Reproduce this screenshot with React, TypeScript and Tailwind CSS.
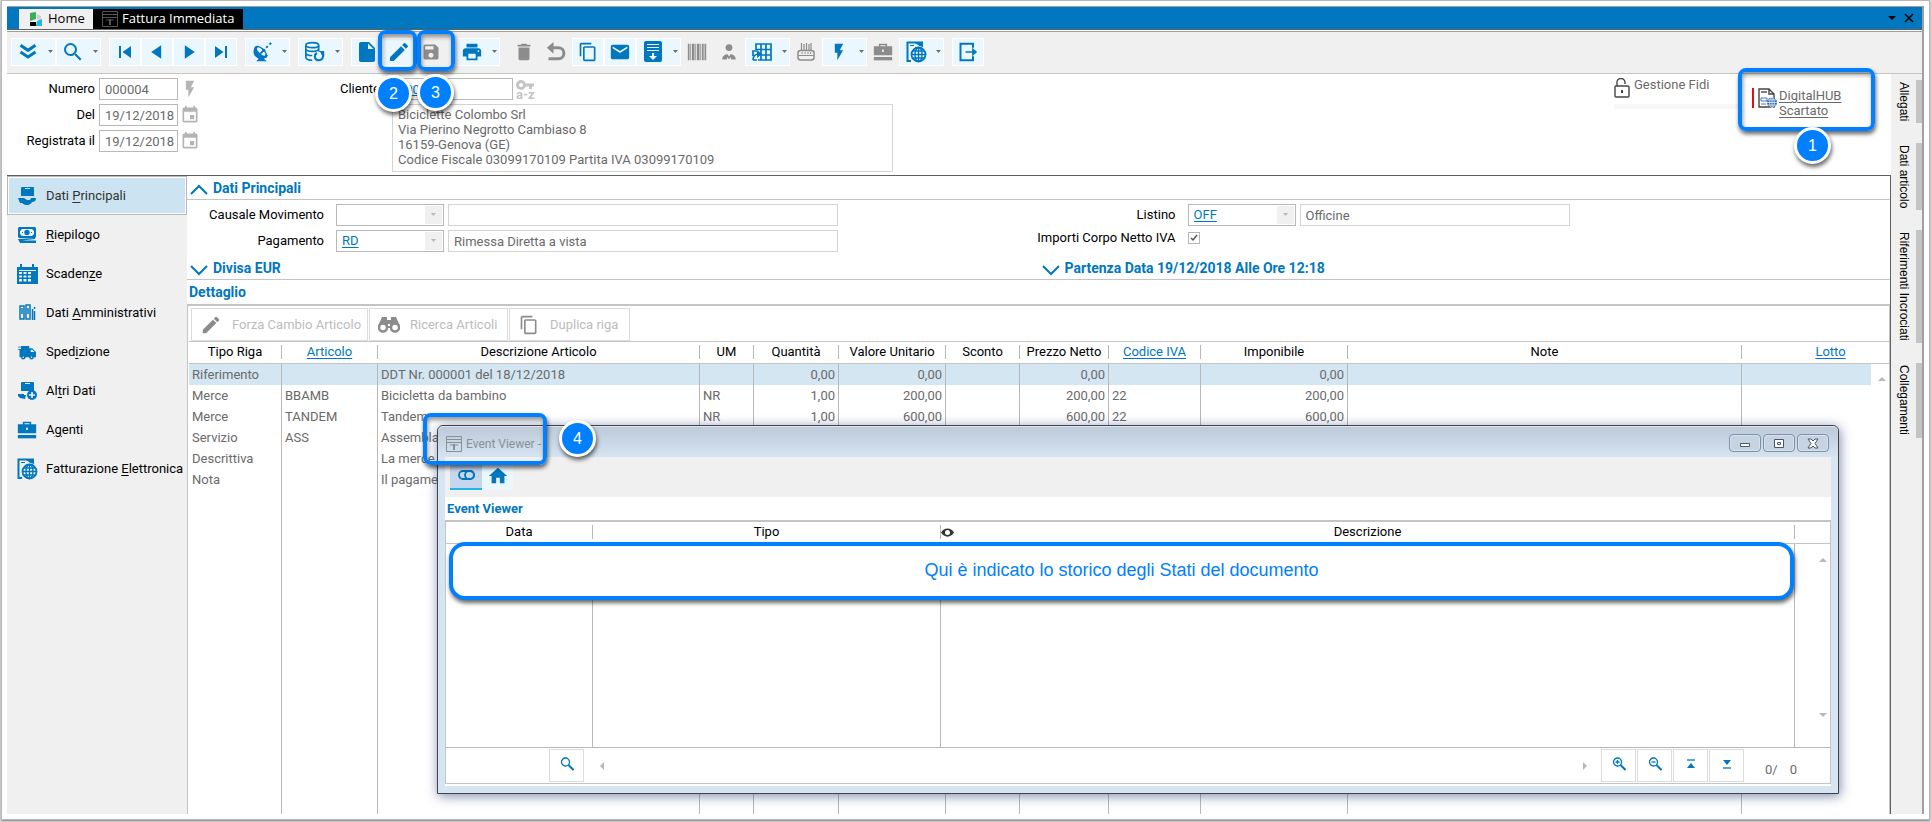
import type { ReactNode } from 'react'
import {
    MdSearch,
    MdSkipPrevious,
    MdSkipNext,
    MdInsertDriveFile,
    MdEdit,
    MdSave,
    MdPrint,
    MdDelete,
    MdContentCopy,
    MdMail,
    MdFlashOn,
    MdEvent,
    MdHome,
} from 'react-icons/md'

const Svg = ({ size = 20, children }: { size?: number; children: ReactNode }) => (
    <svg width={size} height={size} viewBox="0 0 24 24" fill="currentColor" stroke="none" className="shrink-0" aria-hidden="true">
        {children}
    </svg>
)

const DoubleDown = () => (
    <Svg>
        <path d="M3 4l9 6 9-6M3 12l9 6 9-6" fill="none" stroke="currentColor" strokeWidth="3.600" />
    </Svg>
)

const TriLeft = () => <Svg><path d="M17 4v16L5 12z" /></Svg>
const TriRight = () => <Svg><path d="M7 4v16l12-8z" /></Svg>

const Dish = () => (
    <Svg>
        <path d="M3 7c-3 6 0 11 5 13l-3 3h13l-4-3c3-1 5-2 5-4z" />
        <ellipse cx="10.500" cy="12" rx="9.500" ry="5" transform="rotate(45 10.500 12)" />
        <ellipse cx="11" cy="11.500" rx="6.500" ry="2.500" transform="rotate(45 11 11.500)" fill="#ebf7ff" />
        <path d="M10 14l5-5M17 7l2-2M21 3l2-2" fill="none" stroke="currentColor" strokeWidth="2.200" />
        <circle cx="14" cy="10" r="2" />
    </Svg>
)

const Database = () => (
    <Svg size={22}>
        <g fill="none" stroke="currentColor" strokeWidth="1.800">
            <ellipse cx="9" cy="4.500" rx="7" ry="2.800" />
            <path d="M2 4.500v4c0 1.500 3 2.800 7 2.800s7-1.300 7-2.800v-4M2 8.500v4.500c0 1.500 3 2.800 7 2.800M2 13v5c0 1.500 3 3 7 3M16 8.500v3" />
            <path d="M14 13c-4 3-2 8 2 8s7-5 3-8" strokeWidth="2.200" />
        </g>
        <path d="M16 11h6v5z" />
    </Svg>
)

const Undo = () => (
    <Svg>
        <path d="M6 7h9a6.500 6.500 0 010 13H3" fill="none" stroke="currentColor" strokeWidth="3.600" />
        <path d="M9 0v14L1 7z" />
    </Svg>
)

const Archive = () => (
    <svg width="18" height="21" viewBox="0 0 18 21" fill="currentColor" aria-hidden="true">
        <rect width="18" height="21" rx="2" />
        <path d="M3 3.500h12M3 6.500h12M3 9.500h12" stroke="#ebf7ff" />
        <path d="M8 12h2v3h3l-4 4-4-4h3z" fill="#ebf7ff" />
    </svg>
)

const Barcode = () => (
    <Svg>
        <path d="M1 2h2v20H1zM4 2h1v20H4zM6 2h3v20H6zM10 2h1v20h-1zM12 2h3v20h-3zM16 2h1v20h-1zM18 2h2v20h-2zM21 2h2v20h-2z" />
    </Svg>
)

const Person = () => (
    <Svg size={18}>
        <circle cx="12" cy="6" r="4.500" />
        <path d="M3 22c0-5 4-7 7-7l2 3 2-3c3 0 7 2 7 7h-6l-1-3-2 3-2-3-1 3z" />
    </Svg>
)

const Grid = () => (
    <svg width="20" height="18" viewBox="0 0 20 18" fill="none" stroke="currentColor" aria-hidden="true">
        <path d="M4 7V1h15v16H6M4 6.500h15M9 12h10M9 1v16M14 1v16" strokeWidth="1.700" />
        <path d="M1 17c0-4 2-6 6-6M1 13V8h4M1 17h4" strokeWidth="1.700" />
        <path d="M5 7l5 4-5 4z" fill="currentColor" stroke="none" />
    </svg>
)

const Register = () => (
    <svg width="18" height="18" viewBox="0 0 18 18" fill="none" stroke="currentColor" aria-hidden="true">
        <rect x="1" y="7.500" width="16" height="9.500" rx="2.500" strokeWidth="1.500" />
        <path d="M1.500 12.500h15M4.500 0v7M7 1v6M9.500 0v7M12 1v6M14 0v7" strokeWidth="1.200" />
        <path d="M5 9v2M8 9v2M11 9v2M13.500 9v2" />
    </svg>
)

const Briefcase = () => (
    <Svg>
        <path fillRule="evenodd" d="M7 5V2h10v3h6v11H1V5zM9 5h6V4H9zM11 9v3h2V9z" />
        <path d="M1 18h22v4H1z" />
    </Svg>
)

const DocGlobe = () => (
    <svg width="21" height="22" viewBox="0 0 21 22" fill="none" stroke="currentColor" aria-hidden="true">
        <path d="M5 20H1.500V1.500H16V8" strokeWidth="2" />
        <path d="M9 2h6v4zM4 4h4v1H4z" fill="currentColor" stroke="none" />
        <circle cx="12.500" cy="13.500" r="8.500" fill="#f0f7fc" stroke="none" />
        <circle cx="12.500" cy="13.500" r="7" strokeWidth="1.800" />
        <ellipse cx="12.500" cy="13.500" rx="3.500" ry="7" strokeWidth="1.400" />
        <path d="M12.500 6.500v14M6 13.500h13M7 10h11M7 17h11" strokeWidth="1.400" />
    </svg>
)

const Exit = () => (
    <Svg>
        <path d="M18 7V2H3v20h15v-5" fill="none" stroke="currentColor" strokeWidth="2.400" />
        <path d="M9 11h8V7l6 5-6 5v-4H9z" />
    </Svg>
)

const Binoculars = () => (
    <svg width="22" height="17" viewBox="0 0 22 17" fill="currentColor" aria-hidden="true">
        <path d="M4 1h5v3h4V1h5l4 9v2H0v-2z" />
        <circle cx="5" cy="11.500" r="4" fill="#fff" stroke="currentColor" strokeWidth="2.500" />
        <circle cx="17" cy="11.500" r="4" fill="#fff" stroke="currentColor" strokeWidth="2.500" />
        <circle cx="11" cy="9" r="1.200" fill="#fff" />
    </svg>
)

const KeyIcon = () => (
    <svg width="18" height="10" viewBox="0 0 18 10" fill="none" stroke="currentColor" strokeWidth="3" aria-hidden="true">
        <circle cx="5" cy="5" r="3.500" />
        <path d="M9 5h9M14.500 5v4" />
    </svg>
)

const HandBox = ({ plus = false }: { plus?: boolean }) => (
    <svg width="19" height="18" viewBox="0 0 19 18" fill="currentColor" aria-hidden="true">
        <path fillRule="evenodd" d="M3 1a1 1 0 011-1h11a1 1 0 011 1v8H3zM7 1v1h5V1z" />
        {plus ? (
            <>
                <path d="M0 12h6v1h2l-1 4-5-1-2-2z" />
                <circle cx="14" cy="13" r="5" />
                <path d="M14 10v6M11 13h6" stroke="#f0f0f0" strokeWidth="1.600" />
            </>
        ) : (
            <path d="M0 11h6l3 2h3l1-2h5c0 3-2 4-4 4-2 4-7 4-10 1H2z" />
        )}
    </svg>
)

const Money = () => (
    <svg width="18" height="16" viewBox="0 0 18 16" fill="currentColor" aria-hidden="true">
        <path fillRule="evenodd" d="M1 0h16l1 1v9l-1 1H1l-1-1V1zM4 2L2 4v3l2 2h10l2-2V4l-2-2z" />
        <circle cx="9" cy="5.500" r="2.700" />
        <path d="M4 5h1v1H4zM13 5h1v1h-1zM0 12l17-1v1L4 13.500h14V16H2z" />
    </svg>
)

const CalendarGrid = () => (
    <svg width="21" height="20" viewBox="0 0 21 20" fill="currentColor" aria-hidden="true">
        <path d="M0 3h3V0h2v3h10V0h2v3h4v17H0z" />
        <path d="M2 6.500h17" stroke="#f0f0f0" />
        <path d="M2 8h3v2H2zM6.500 8h3v2h-3zM11 8h3v2h-3zM2 11.500h3v2H2zM6.500 11.500h3v2h-3zM11 11.500h3v2h-3zM2 15h3v2.500H2zM6.500 15h3v2.500h-3zM11 15h3v2.500h-3z" fill="#f0f0f0" />
    </svg>
)

const Binders = () => (
    <svg width="17" height="17" viewBox="0 0 17 17" fill="none" stroke="currentColor" aria-hidden="true">
        <path d="M1 2h4v13H1zM7 1h4v14H7z" strokeWidth="1.500" />
        <path d="M3 4v6M9 4v6M13.500 5v11M15.500 3v2M15.500 7v9" strokeWidth="1.500" />
    </svg>
)

const Truck = () => (
    <Svg size={18}>
        <path d="M4 4h11v3h4l5 5v7H2V9H0V8h4V6H0V5h4z" />
        <circle cx="7" cy="19" r="3" />
        <circle cx="18" cy="19" r="3" />
        <circle cx="7" cy="19" r="1" fill="#f0f0f0" />
        <circle cx="18" cy="19" r="1" fill="#f0f0f0" />
        <path d="M17 9h2l3 3h-5z" fill="#f0f0f0" />
    </Svg>
)

const FormIcon = () => (
    <svg width="16" height="16" viewBox="0 0 16 16" fill="none" stroke="currentColor" className="shrink-0" aria-hidden="true">
        <path d="M.5.5h15v15H.5zM1 3.500h14M1 6.500h14M4 9h8" />
        <path d="M8 8v6" strokeWidth="2" />
    </svg>
)

const Chevron = ({ up = false }: { up?: boolean }) => (
    <svg width="18" height="12" viewBox="0 0 18 12" fill="none" stroke="#0077be" strokeWidth="2" className={up ? 'mt-0.5' : 'mt-1.5'} aria-hidden="true">
        <path d={up ? 'M1 11l8-8 8 8' : 'M1 1l8 8 8-8'} />
    </svg>
)

const Arrow = ({ dir }: { dir: 'up' | 'down' | 'left' | 'right' }) => {
    const d = {
        up: 'M0 6l4-4 4 4z',
        down: 'M0 2l4 4 4-4z',
        left: 'M6 0v8L2 4z',
        right: 'M2 0v8l4-4z',
    }[dir]
    return (
        <svg width="8" height="8" viewBox="0 0 8 8" fill="#b8b8b8" aria-hidden="true">
            <path d={d} />
        </svg>
    )
}

type Tool = { name: string; icon: ReactNode; menu?: boolean; off?: boolean }

const toolGroups: Tool[][] = [
    [
        { name: 'Espandi', icon: <DoubleDown />, menu: true },
        { name: 'Cerca', icon: <MdSearch className="size-6" />, menu: true },
    ],
    [
        { name: 'Primo', icon: <MdSkipPrevious className="size-6" /> },
        { name: 'Precedente', icon: <TriLeft /> },
        { name: 'Successivo', icon: <TriRight /> },
        { name: 'Ultimo', icon: <MdSkipNext className="size-6" /> },
    ],
    [{ name: 'Radar', icon: <Dish />, menu: true }],
    [{ name: 'Archivi', icon: <Database />, menu: true }],
    [
        { name: 'Nuovo', icon: <MdInsertDriveFile className="size-6" /> },
        { name: 'Modifica', icon: <MdEdit className="size-6" /> },
        { name: 'Salva', icon: <MdSave className="size-5" />, off: true },
    ],
    [{ name: 'Stampa', icon: <MdPrint className="size-[22px]" />, menu: true }],
    [
        { name: 'Elimina', icon: <MdDelete className="size-[22px]" />, off: true },
        { name: 'Annulla', icon: <Undo />, off: true },
        { name: 'Copia', icon: <MdContentCopy className="size-5" /> },
        { name: 'Email', icon: <MdMail className="size-[22px]" /> },
        { name: 'Archivia', icon: <Archive />, menu: true },
        { name: 'Codice a barre', icon: <Barcode />, off: true },
        { name: 'Utente', icon: <Person />, off: true },
        { name: 'Griglia', icon: <Grid />, menu: true },
        { name: 'Registratore', icon: <Register />, off: true },
        { name: 'Azioni', icon: <MdFlashOn className="size-5" />, menu: true },
        { name: 'Valigetta', icon: <Briefcase />, off: true },
        { name: 'Fattura elettronica', icon: <DocGlobe />, menu: true },
    ],
    [{ name: 'Esci', icon: <Exit /> }],
]

const ToolButton = ({ tool }: { tool: Tool }) => {
    let look = 'w-8 justify-center bg-[#ebf7ff] border-white text-[#0077be]'
    if (tool.menu) look = 'w-[45px] justify-between pl-1 pr-0.5 bg-[#ebf7ff] border-white text-[#0077be]'
    if (tool.off) look = 'w-8 justify-center border-transparent text-[#8c8c8c]'
    return (
        <button aria-label={tool.name} className={`flex h-7 items-center border ${look}`}>
            <span className="flex w-6 justify-center">{tool.icon}</span>
            {tool.menu && (
                <svg width="5" height="4" viewBox="0 0 5 4" fill="#6e6e6e" aria-hidden="true">
                    <path d="M0 0h5L2.500 3z" />
                </svg>
            )}
        </button>
    )
}

const navItems = [
    { pre: 'Dati ', key: 'P', post: 'rincipali', icon: <HandBox />, active: true },
    { pre: '', key: 'R', post: 'iepilogo', icon: <Money /> },
    { pre: 'Scaden', key: 'z', post: 'e', icon: <CalendarGrid /> },
    { pre: 'Dati ', key: 'A', post: 'mministrativi', icon: <Binders /> },
    { pre: 'Sped', key: 'i', post: 'zione', icon: <Truck /> },
    { pre: 'Al', key: 't', post: 'ri Dati', icon: <HandBox plus /> },
    { pre: 'A', key: 'g', post: 'enti', icon: <Briefcase /> },
    { pre: 'Fatturazione ', key: 'E', post: 'lettronica', icon: <DocGlobe /> },
]

const columns = [
    { name: 'Tipo Riga', width: 'w-[93px]' },
    { name: 'Articolo', width: 'w-24', link: true },
    { name: 'Descrizione Articolo', width: 'w-[322px]' },
    { name: 'UM', width: 'w-[54px]' },
    { name: 'Quantità', width: 'w-[85px]', right: true },
    { name: 'Valore Unitario', width: 'w-[107px]', right: true },
    { name: 'Sconto', width: 'w-[74px]', right: true },
    { name: 'Prezzo Netto', width: 'w-[89px]', right: true },
    { name: 'Codice IVA', width: 'w-[92px]', link: true },
    { name: 'Imponibile', width: 'w-[147px]', right: true },
    { name: 'Note', width: '' },
    { name: 'Lotto', width: 'w-[129px]', link: true },
]

const rows = [
    ['Riferimento', '', 'DDT Nr. 000001 del 18/12/2018', '', '0,00', '0,00', '', '0,00', '', '0,00', '', ''],
    ['Merce', 'BBAMB', 'Bicicletta da bambino', 'NR', '1,00', '200,00', '', '200,00', '22', '200,00', '', ''],
    ['Merce', 'TANDEM', 'Tandem', 'NR', '1,00', '600,00', '', '600,00', '22', '600,00', '', ''],
    ['Servizio', 'ASS', 'Assemblaggio', '', '', '', '', '', '', '', '', ''],
    ['Descrittiva', '', 'La merce', '', '', '', '', '', '', '', '', ''],
    ['Nota', '', 'Il pagamento', '', '', '', '', '', '', '', '', ''],
]

const sideTabs = [
    { name: 'Allegati', height: 'h-[43px]' },
    { name: 'Dati articolo', height: 'h-[67px]' },
    { name: 'Riferimenti Incrociati', height: 'h-[113px]' },
    { name: 'Collegamenti', height: 'h-[75px]' },
]

const Field = ({ id, label, value, icon }: { id: string; label: string; value: string; icon: ReactNode }) => (
    <div className="flex h-[22px] items-center">
        <label htmlFor={id} className="mr-1 w-[88px] text-right">{label}</label>
        <input id={id} defaultValue={value} className="h-full w-[79px] border border-[#b8b8b8] pl-[5px] text-[#6a6a6a]" />
        <span className="ml-0.5 text-[#b4b4b4]">{icon}</span>
    </div>
)

const LookupRow = ({ id, label, code, text, wide }: { id: string; label: string; code: string; text: string; wide?: boolean }) => (
    <div className="flex h-[22px] items-center">
        <label htmlFor={id} className="mr-3 w-[137px] text-right">{label}</label>
        <div className="relative mr-1 h-full w-[108px]">
            <select id={id} className="h-full w-full appearance-none border border-[#b8b8b8] bg-white px-[5px] text-[#0077be] underline underline-offset-2">
                <option>{code}</option>
            </select>
            <span className="pointer-events-none absolute inset-y-0.5 right-0.5 flex w-[17px] items-center justify-center bg-[#f0f0f0]">
                <svg width="5" height="4" viewBox="0 0 5 4" fill="#b8b8b8" aria-hidden="true"><path d="M0 0h5L2.500 3z" /></svg>
            </span>
        </div>
        <input
            aria-label={`Descrizione ${label}`}
            defaultValue={text}
            className={`h-full border border-[#d4d4d4] px-[5px] text-[#6a6a6a] ${wide ? 'w-[390px]' : 'w-[270px]'}`}
        />
    </div>
)

const SectionTitle = ({ children, up }: { children: ReactNode; up?: boolean }) => (
    <h2 className="flex h-6 items-center gap-[5px] border-b border-[#c4c4c4] pl-[3px] text-sm font-bold text-[#0077be]">
        <Chevron up={up} />
        {children}
    </h2>
)

const Badge = ({ n, pos }: { n: number; pos: string }) => (
    <span
        className={`absolute z-30 flex size-[37px] items-center justify-center rounded-full border-[3px] border-white bg-[#0080ff] font-['Liberation_Sans',sans-serif] text-base text-white shadow-[1px_3px_4px_rgba(0,0,0,0.6)] ${pos}`}
    >
        {n}
    </span>
)

const Highlight = ({ pos }: { pos: string }) => (
    <span className={`pointer-events-none absolute z-20 rounded-lg border-4 border-[#0080ff] shadow-[1px_3px_4px_rgba(0,0,0,0.6),inset_1px_3px_4px_rgba(0,0,0,0.4)] ${pos}`} />
)

const Divider = ({ children, last, center = true }: { children?: ReactNode; last?: boolean; center?: boolean }) => (
    <div className={`mb-px flex h-3.5 items-center ${center ? 'justify-center' : ''} ${last ? 'pl-12' : 'border-r border-[#b8b8b8]'}`}>{children}</div>
)

function TitleBar() {
    return (
        <header className="flex h-[25px] items-end border-b border-[#a0a0a0] bg-white pb-px">
            <div className="flex h-full w-full items-end border-b border-[#606060] bg-[#0077be] pl-3 font-['Open_Sans',sans-serif] text-[13px] whitespace-nowrap">
                <button className="flex h-5 w-[74px] items-center gap-1.5 bg-[#f0f0f0] pl-[11px]">
                    <svg width="12" height="15" viewBox="0 0 12 15" aria-hidden="true">
                        <path d="M0 1l6-1v7L0 9z" fill="#3cab5a" />
                        <path d="M7 2l4 2v5l-4-2z" fill="#d0d0d0" />
                        <path d="M0 10h6v4H0z" />
                        <path d="M7 9l5-2v7H6z" fill="#25b5e8" />
                    </svg>
                    Home
                </button>
                <button className="flex h-5 w-[150px] items-center gap-1 bg-black pl-[9px] text-white">
                    <span className="text-[#555]"><FormIcon /></span>
                    Fattura Immediata
                </button>
                <div className="ml-auto flex h-full items-center gap-2 pr-2 text-black">
                    <button aria-label="Elenco schede">
                        <svg width="8" height="5" viewBox="0 0 8 5"><path d="M0 0h8L4 4z" /></svg>
                    </button>
                    <button aria-label="Chiudi scheda">
                        <svg width="10" height="10" viewBox="0 0 10 10" stroke="#000" strokeWidth="1.600"><path d="M1 1l8 8M9 1L1 9" /></svg>
                    </button>
                </div>
            </div>
        </header>
    )
}

function DocumentHeader() {
    return (
        <section className="flex h-[102px] border-b border-[#606060] bg-white pt-1">
            <div className="flex flex-col gap-1">
                <Field id="numero" label="Numero" value="000004" icon={<MdFlashOn className="size-5" />} />
                <Field id="del" label="Del" value="19/12/2018" icon={<MdEvent className="size-5" />} />
                <Field id="registrata" label="Registrata il" value="19/12/2018" icon={<MdEvent className="size-5" />} />
            </div>
            <div className="ml-[138px] flex flex-col gap-1">
                <div className="flex h-[22px] items-center">
                    <label htmlFor="cliente" className="mr-1 w-[50px] pr-2 text-right">Cliente</label>
                    <input id="cliente" defaultValue="000001" className="h-full w-[121px] border border-[#b8b8b8] px-[5px] text-[#0077be] underline" />
                    <span className="ml-[3px] flex flex-col items-center text-[13px] leading-[9px] font-bold text-[#c4c4c4]">
                        <KeyIcon />
                        a-z
                    </span>
                </div>
                <textarea
                    aria-label="Dati cliente"
                    readOnly
                    className="ml-[54px] h-[68px] w-[501px] resize-none border border-[#d4d4d4] px-[5px] py-0.5 leading-[15px] text-[#6a6a6a]"
                    value={'Biciclette Colombo Srl\nVia Pierino Negrotto Cambiaso 8\n16159-Genova (GE)\nCodice Fiscale 03099170109 Partita IVA 03099170109'}
                />
            </div>
            <div className="ml-auto w-[124px] text-[#6a6a6a]">
                <div className="flex items-start gap-1 leading-[14px]">
                    <svg width="16" height="20" viewBox="0 0 16 20" fill="none" stroke="#444" strokeWidth="1.400" aria-hidden="true">
                        <rect x="1" y="8" width="14" height="11" rx="1" />
                        <path d="M3 8V5a4 4 0 018-1v2" />
                        <path d="M8 12v3" strokeWidth="2" />
                    </svg>
                    Gestione Fidi
                </div>
                <div className="mt-1.5 h-[5px] bg-[#f7f7f7]" />
            </div>
            <div className="relative w-[153px] text-[#6a6a6a]">
                <div className="mt-2.5 ml-3.5 flex">
                    <span className="mr-1 h-5 w-0.5 bg-[#e01010]" />
                    <svg width="20" height="20" viewBox="0 0 20 20" fill="none" stroke="#444" aria-hidden="true">
                        <path d="M1 1h10l5 5v13H1zM11 1v5h5" strokeWidth="1.400" />
                        <path d="M3 4h6" strokeWidth="1.400" />
                        <path d="M3 10h6v3H3zM3 16h5" stroke="#3c78c8" />
                        <circle cx="14" cy="14.500" r="5" fill="#2b64b0" stroke="none" />
                        <path d="M9 14.500h10M14 9.500v10M10 12h8M10 17h8" stroke="#fff" strokeWidth=".7" />
                        <ellipse cx="14" cy="14.500" rx="2.300" ry="5" stroke="#fff" strokeWidth=".7" />
                    </svg>
                    <a href="#digitalhub" className="ml-px w-20 leading-[15px] underline underline-offset-2">DigitalHUB Scartato</a>
                </div>
                <Highlight pos="-top-2.5 left-0 h-[63px] w-[137px]" />
                <Badge n={1} pos="top-[49px] left-14" />
            </div>
        </section>
    )
}

function DetailTable() {
    return (
        <table className="h-full w-full table-fixed border-separate border-spacing-0">
            <thead>
                <tr className="h-[22px]">
                    {columns.map((col, i) => (
                        <th key={col.name} className={`border-b border-[#c4c4c4] p-0 font-normal whitespace-nowrap ${col.width}`}>
                            <Divider last={i === columns.length - 1}>
                                {col.link ? <a href="#colonna" className="text-[#0077be] underline underline-offset-2">{col.name}</a> : col.name}
                            </Divider>
                        </th>
                    ))}
                    <th className="w-[18px] border-b border-[#c4c4c4] p-0" />
                </tr>
            </thead>
            <tbody className="text-[#6a6a6a]">
                {rows.map((row, r) => (
                    <tr key={r} className="h-[21px]">
                        {row.map((cell, i) => (
                            <td
                                key={i}
                                className={`overflow-hidden px-[3px] py-0 whitespace-nowrap ${i < row.length - 1 ? 'border-r border-[#b8b8b8]' : ''} ${columns[i].right ? 'text-right' : ''} ${r === 0 ? 'bg-[#d4e6f2]' : ''}`}
                            >
                                {cell}
                            </td>
                        ))}
                        <td className="p-0">{r === 0 && <span className="flex justify-end pt-2 pr-[3px]"><Arrow dir="up" /></span>}</td>
                    </tr>
                ))}
                <tr>
                    {columns.map((col, i) => (
                        <td key={col.name} className={i < columns.length - 1 ? 'border-r border-[#b8b8b8]' : ''} />
                    ))}
                    <td />
                </tr>
            </tbody>
        </table>
    )
}

const ActionButton = ({ icon, children, width }: { icon: ReactNode; children: ReactNode; width: string }) => (
    <button className={`flex h-[33px] items-center border border-[#dcdcdc] pl-2 text-[#bcbcbc] ${width}`}>
        <span className="mr-2.5 flex w-[22px] justify-center text-[#8c8c8c]">{icon}</span>
        {children}
    </button>
)

const FooterButton = ({ label, children }: { label: string; children: ReactNode }) => (
    <button aria-label={label} className="flex h-[33px] w-[35px] items-center justify-center border border-[#dcdcdc] pb-1 text-[#0077be]">
        <svg width="14" height="14" viewBox="0 0 14 14" fill="none" stroke="currentColor" strokeWidth="1.300" aria-hidden="true">
            {children}
        </svg>
    </button>
)

const WindowButton = ({ label, children }: { label: string; children: ReactNode }) => (
    <button aria-label={label} className="flex h-[18px] w-8 items-center justify-center rounded-sm border border-[#8090a8] bg-[#c6d3e1] shadow-[inset_0_0_0_1px_#d8e2ee]">
        <svg width="12" height="11" viewBox="0 0 12 11" fill="#fff" stroke="#4c5468" aria-hidden="true">{children}</svg>
    </button>
)

function EventViewer() {
    return (
        <div className="absolute top-[424px] right-[90px] left-[435px] z-10 flex h-[369px] flex-col rounded-t-md border border-[#404448] bg-[#d7e4f2] px-[7px] pb-[7px] shadow-[1px_2px_12px_rgba(40,60,120,0.6)]">
            <div className="-mx-[7px] flex h-[31px] items-center justify-between rounded-t-md border-t border-[#dce6f0] bg-linear-to-b from-[#bccad9] to-[#d6e3f1] pt-1 pr-[9px] pl-2">
                <div className="flex items-center gap-1 text-xs text-[#8a8f96]">
                    <FormIcon />
                    Event Viewer -
                </div>
                <div className="mb-0.5 flex gap-0.5">
                    <WindowButton label="Riduci"><path d="M1.500 5.500h9v3h-9z" /></WindowButton>
                    <WindowButton label="Ingrandisci"><path d="M1.500 1.500h9v8h-9zM4.500 4.500h3v2h-3z" /></WindowButton>
                    <WindowButton label="Chiudi"><path d="M1 1h3l2 2 2-2h3L8 5.500l3 4.500H8L6 8l-2 2H1l3-4.500z" /></WindowButton>
                </div>
            </div>
            <div className="flex h-10 items-end bg-[#f0f0f0] pb-[7px] pl-[5px]">
                <button aria-label="Collega" className="flex h-7 w-8 items-center justify-center border-b-2 border-[#1fb5e8] bg-[#c6d6ec] text-[#0077be]">
                    <svg width="17" height="10" viewBox="0 0 17 10" fill="none" stroke="currentColor" strokeWidth="1.800">
                        <rect x="1" y="1" width="15" height="8" rx="4" />
                        <rect x="7" y="1" width="9" height="8" rx="4" />
                    </svg>
                </button>
                <button aria-label="Home" className="flex h-7 w-[31px] items-center justify-center bg-[#ebf7ff] text-[#0077be]">
                    <MdHome className="size-[22px]" />
                </button>
            </div>
            <div className="flex min-h-0 flex-1 flex-col bg-white pb-0.5">
                <h2 className="flex h-[23px] items-center pl-0.5 text-[13px] font-bold text-[#0077be]">Event Viewer</h2>
                <div className="relative flex min-h-0 flex-1 flex-col border border-t-2 border-[#c4c4c4]">
                    <table className="w-full flex-1 table-fixed border-separate border-spacing-0">
                        <thead>
                            <tr className="h-[22px]">
                                <th className="w-[147px] border-b border-[#c4c4c4] p-0 font-normal"><Divider>Data</Divider></th>
                                <th className="w-[348px] border-b border-[#c4c4c4] p-0 font-normal"><Divider>Tipo</Divider></th>
                                <th className="border-b border-[#c4c4c4] p-0 font-normal">
                                    <Divider center={false}>
                                        <svg width="13" height="9" viewBox="0 0 13 9" aria-hidden="true">
                                            <path d="M0 4.500C3-1 10-1 13 4.500 10 10 3 10 0 4.500z" fill="#333" />
                                            <circle cx="6.500" cy="4.500" r="2.500" fill="#fff" />
                                        </svg>
                                        <span className="flex-1 pr-[13px] text-center">Descrizione</span>
                                    </Divider>
                                </th>
                                <th className="w-[35px] border-b border-[#c4c4c4] p-0" />
                            </tr>
                        </thead>
                        <tbody>
                            <tr>
                                <td className="border-r border-b border-[#b8b8b8]" />
                                <td className="border-r border-b border-[#b8b8b8]" />
                                <td className="border-r border-b border-[#b8b8b8]" />
                                <td className="border-b border-[#b8b8b8] p-0">
                                    <div className="flex h-[203px] flex-col items-end justify-between pt-3 pr-[3px] pb-7">
                                        <Arrow dir="up" />
                                        <Arrow dir="down" />
                                    </div>
                                </td>
                            </tr>
                        </tbody>
                    </table>
                    <div className="flex h-[35px] items-center pl-[103px] text-[#6a6a6a]">
                        <FooterButton label="Cerca">
                            <circle cx="5.500" cy="5" r="4" />
                            <path d="M8.500 8l5 5" strokeWidth="2" />
                        </FooterButton>
                        <span className="ml-3.5"><Arrow dir="left" /></span>
                        <span className="mr-3 ml-auto"><Arrow dir="right" /></span>
                        <div className="flex gap-px">
                            <FooterButton label="Ingrandisci">
                                <circle cx="5.500" cy="5" r="4" />
                                <path d="M8.500 8l5 5" strokeWidth="2" />
                                <path d="M3.500 5h4M5.500 3v4" />
                            </FooterButton>
                            <FooterButton label="Riduci">
                                <circle cx="5.500" cy="5" r="4" />
                                <path d="M8.500 8l5 5" strokeWidth="2" />
                                <path d="M3.500 5h4" />
                            </FooterButton>
                            <FooterButton label="Inizio">
                                <path d="M3 3h8" />
                                <path d="M3 11h8L7 6z" fill="currentColor" stroke="none" />
                            </FooterButton>
                            <FooterButton label="Fine">
                                <path d="M3 11h8" />
                                <path d="M3 3h8L7 8z" fill="currentColor" stroke="none" />
                            </FooterButton>
                        </div>
                        <span className="mt-2 mr-[33px] ml-[21px] flex gap-3"><span>0/</span><span>0</span></span>
                    </div>
                    <div className="absolute top-5 right-9 left-[3px] flex h-[58px] items-center justify-center rounded-2xl border-4 border-[#0080ff] bg-white pb-0.5 font-['Liberation_Sans',sans-serif] text-lg text-[#0080ff] shadow-[1px_3px_4px_rgba(0,0,0,0.6)]">
                        Qui è indicato lo storico degli Stati del documento
                    </div>
                </div>
            </div>
        </div>
    )
}

export default function App() {
    return (
        <div className="h-screen bg-[#ececec] px-px pb-0.5 font-['Roboto',sans-serif] text-[13px] text-black">
            <div className="relative flex h-full border border-[#b8b8b8] bg-white p-[5px] shadow-[0_1px_2px_rgba(0,0,0,0.5)]">
                <div className="flex min-w-0 flex-1 flex-col border-t border-r-2 border-[#a0a0a0]">
                    <TitleBar />
                    <div className="flex h-[42px] items-center gap-2 border-b border-[#c4c4c4] bg-[#f0f0f0] pb-0.5 pl-1">
                        {toolGroups.map((group, i) => (
                            <div key={i} className="flex">
                                {group.map((tool) => <ToolButton key={tool.name} tool={tool} />)}
                            </div>
                        ))}
                    </div>
                    <div className="flex min-h-0 flex-1">
                        <div className="flex min-w-0 flex-1 flex-col">
                            <DocumentHeader />
                            <div className="flex min-h-0 flex-1 border-r border-[#606060]">
                                <nav className="w-[180px] shrink-0 bg-[#f0f0f0]">
                                    {navItems.map((item) => (
                                        <a
                                            key={item.key + item.post}
                                            href="#sezione"
                                            className={`flex h-[39px] items-center whitespace-nowrap ${item.active ? 'border border-[#b8b8b8] bg-[#cce4f2] text-[#333] shadow-[inset_0_0_0_1px_#fff]' : 'border border-transparent'}`}
                                        >
                                            <span className="flex w-[38px] justify-center text-[#0077be]">{item.icon}</span>
                                            <span>
                                                {item.pre}
                                                <u className="underline-offset-2">{item.key}</u>
                                                {item.post}
                                            </span>
                                        </a>
                                    ))}
                                </nav>
                                <main className="flex min-w-0 flex-1 flex-col bg-white">
                                    <SectionTitle up>Dati Principali</SectionTitle>
                                    <div className="grid grid-cols-2">
                                        <div className="flex flex-col gap-1 py-1">
                                            <LookupRow id="causale" label="Causale Movimento" code="" text="" wide />
                                            <LookupRow id="pagamento" label="Pagamento" code="RD" text="Rimessa Diretta a vista" wide />
                                        </div>
                                        <div className="flex flex-col gap-1 py-1">
                                            <LookupRow id="listino" label="Listino" code="OFF" text="Officine" />
                                            <div className="flex h-4 items-center">
                                                <label htmlFor="netto" className="mr-3 flex w-[137px] justify-end whitespace-nowrap">Importi Corpo Netto IVA</label>
                                                <input
                                                    id="netto"
                                                    type="checkbox"
                                                    defaultChecked
                                                    className="peer size-3 appearance-none border border-[#b8b8b8]"
                                                />
                                                <svg width="8" height="8" viewBox="0 0 8 8" fill="none" stroke="#555" strokeWidth="1.500" className="pointer-events-none invisible -ml-2.5 peer-checked:visible">
                                                    <path d="M1 4l2 2 4-5" />
                                                </svg>
                                            </div>
                                        </div>
                                        <SectionTitle>Divisa EUR</SectionTitle>
                                        <SectionTitle>Partenza Data 19/12/2018 Alle Ore 12:18</SectionTitle>
                                    </div>
                                    <h2 className="flex h-[26px] items-center border-b-2 border-[#c4c4c4] pl-0.5 text-sm font-bold text-[#0077be]">Dettaglio</h2>
                                    <div className="flex min-h-0 flex-1 flex-col border-x border-[#c4c4c4] pl-px">
                                        <div className="flex gap-px border-b border-[#c4c4c4] pt-0.5 pl-0.5">
                                            <ActionButton width="w-[177px]" icon={<MdEdit className="size-[22px]" />}>Forza Cambio Articolo</ActionButton>
                                            <ActionButton width="w-[139px]" icon={<Binoculars />}>Ricerca Articoli</ActionButton>
                                            <ActionButton width="w-[121px]" icon={<MdContentCopy className="size-5" />}>Duplica riga</ActionButton>
                                        </div>
                                        <div className="min-h-0 flex-1">
                                            <DetailTable />
                                        </div>
                                    </div>
                                </main>
                            </div>
                        </div>
                        <aside className="flex w-[31px] flex-col gap-5 bg-[#f0f0f0] pt-1.5">
                            {sideTabs.map((tab) => (
                                <button
                                    key={tab.name}
                                    className={`flex w-full items-center justify-center border-r-[6px] border-[#c4c4c4] font-['Liberation_Sans',sans-serif] text-xs whitespace-nowrap [writing-mode:vertical-rl] ${tab.height}`}
                                >
                                    {tab.name}
                                </button>
                            ))}
                        </aside>
                    </div>
                </div>
                <EventViewer />
                <Highlight pos="top-[29px] left-[376px] h-[41px] w-[39px]" />
                <Highlight pos="top-[29px] left-[415px] h-[41px] w-[38px]" />
                <Badge n={2} pos="top-[74px] left-[373px]" />
                <Badge n={3} pos="top-[73px] left-[415px]" />
                <Highlight pos="top-[412px] left-[421px] h-[52px] w-[124px]" />
                <Badge n={4} pos="top-[419px] left-[557px]" />
            </div>
        </div>
    )
}
